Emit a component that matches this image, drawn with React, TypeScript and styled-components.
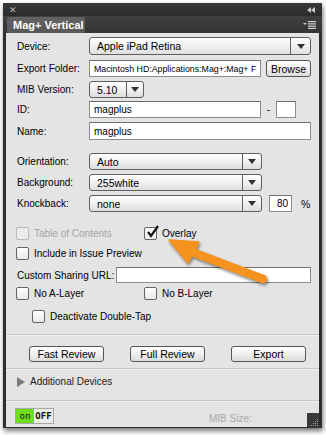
import React from 'react';
import styled, { createGlobalStyle } from 'styled-components';

const GlobalStyle = createGlobalStyle`
    html, body {
        margin: 0;
        padding: 0;
        background: #ffffff;
    }
    body {
        font-family: "Liberation Sans", Arial, sans-serif;
        font-size: 10px;
        color: #000;
    }
`

const Page = styled.div`
    position: relative;
    width: 326px;
    height: 435px;
    padding: 3px 0 0 3px;
    box-sizing: border-box;
    overflow: hidden;
`

const Window = styled.div`
    width: 319px;
    height: 425px;
    background: #2f2f2f;
    box-shadow: 1px 3px 5px rgba(0, 0, 0, 0.55);
    display: flex;
    flex-direction: column;
`

const TitleStrip = styled.div`
    height: 13px;
    display: flex;
    align-items: center;
    justify-content: space-between;
    padding: 0 7px 0 6px;
    color: #b8b8b8;
    font-size: 9px;
    background: linear-gradient(#3a3a3a, #2b2b2b);
`

const TabBar = styled.div`
    height: 17px;
    display: flex;
    align-items: flex-end;
    justify-content: space-between;
    padding: 0 6px 0 4px;
    background: linear-gradient(#3f3f3f, #353535);
`

const Tab = styled.div`
    width: 72px;
    height: 16px;
    line-height: 16px;
    padding-left: 6px;
    background: linear-gradient(#626262, #585858);
    color: #fff;
    font-weight: bold;
    font-size: 11px;
    border-radius: 2px 2px 0 0;
`

const MenuIcon = styled.div`
    height: 16px;
    display: flex;
    align-items: center;
`

const Body = styled.div`
    flex: 1;
    display: flex;
    padding: 0 3px 1px 3px;
`

const Content = styled.div`
    flex: 1;
    background: #e4e4e4;
    display: flex;
    flex-direction: column;
`

const Section = styled.div<{ $top: number }>`
    padding: 0 7px 0 11px;
    margin-top: ${p => p.$top}px;
    display: flex;
    flex-direction: column;
`

const Row = styled.div<{ $h: number; $top?: number }>`
    display: flex;
    align-items: center;
    height: ${p => p.$h}px;
    margin-top: ${p => p.$top || 0}px;
`

const Label = styled.span<{ $w?: number }>`
    width: ${p => p.$w || 72}px;
    flex: none;
    font-size: 10px;
    white-space: nowrap;
`

const Select = styled.div<{ $w: number }>`
    width: ${p => p.$w}px;
    height: 100%;
    box-sizing: border-box;
    border: 1px solid #5f5f5f;
    border-radius: 3px;
    background: linear-gradient(#ffffff, #f2f2f2 45%, #dedede);
    display: flex;
    flex: none;
`

const SelectText = styled.span`
    flex: 1;
    display: flex;
    align-items: center;
    padding-left: 7px;
    font-size: 10.5px;
    white-space: nowrap;
    overflow: hidden;
`

const SelectArrow = styled.span<{ $w: number }>`
    width: ${p => p.$w}px;
    border-left: 1px solid #5f5f5f;
    display: flex;
    align-items: center;
    justify-content: center;

    &::after {
        content: "";
        border-left: 4px solid transparent;
        border-right: 4px solid transparent;
        border-top: 5px solid #333;
    }
`

const TextBox = styled.div<{ $w: number; $align?: string; $size?: number }>`
    width: ${p => p.$w}px;
    height: 100%;
    box-sizing: border-box;
    border: 1px solid #8c8c8c;
    border-top-color: #6e6e6e;
    background: #fff;
    display: flex;
    align-items: center;
    justify-content: ${p => p.$align || 'flex-start'};
    padding: 0 3px 0 4px;
    font-size: ${p => p.$size || 10}px;
    white-space: nowrap;
    overflow: hidden;
    flex: none;
`

const Button = styled.div<{ $w: number }>`
    width: ${p => p.$w}px;
    height: 100%;
    box-sizing: border-box;
    border: 1px solid #555;
    border-radius: 3px;
    background: linear-gradient(#ffffff, #f0f0f0 50%, #dcdcdc);
    display: flex;
    align-items: center;
    justify-content: center;
    font-size: 10.5px;
    flex: none;
`

const Gap = styled.span<{ $w: number }>`
    width: ${p => p.$w}px;
    flex: none;
`

const Dash = styled.span`
    width: 15px;
    text-align: center;
    font-size: 10px;
`

const Percent = styled.span`
    margin-left: 9px;
    font-size: 10.5px;
`

const CheckGrid = styled.div<{ $top?: number }>`
    display: grid;
    grid-template-columns: 128px auto;
    align-items: center;
    height: 13px;
    margin-top: ${p => p.$top || 0}px;
`

const CheckItem = styled.div<{ $disabled?: boolean; $indent?: number }>`
    display: flex;
    align-items: center;
    gap: 5px;
    margin-left: ${p => (p.$indent || 0) - 1}px;
    color: ${p => (p.$disabled ? '#a4a4a4' : '#000')};
    font-size: 10px;
    white-space: nowrap;
`

const Box = styled.span<{ $disabled?: boolean }>`
    position: relative;
    width: 13px;
    height: 13px;
    box-sizing: border-box;
    border: 1px solid ${p => (p.$disabled ? '#b9b9b9' : '#656565')};
    border-radius: 2px;
    background: ${p => (p.$disabled ? '#ececec' : 'linear-gradient(#ffffff, #e9e9e9)')};
    flex: none;

    svg {
        position: absolute;
        left: 1px;
        top: -3px;
    }
`

const Separator = styled.div<{ $top: number }>`
    height: 1px;
    margin-top: ${p => p.$top}px;
    background: #c6c6c6;
    box-shadow: 0 1px 0 #f2f2f2;
`

const ButtonRow = styled.div`
    display: flex;
    gap: 26px;
    height: 16px;
    margin-top: 11px;
    padding-left: 23px;
`

const Expander = styled.div`
    display: flex;
    align-items: center;
    height: 11px;
    margin-top: 7px;
    padding-left: 11px;
    gap: 5px;
    font-size: 10px;
    color: #1a1a1a;

    &::before {
        content: "";
        border-top: 5px solid transparent;
        border-bottom: 5px solid transparent;
        border-left: 8px solid #7a7a7a;
    }
`

const Footer = styled.div`
    flex: 1;
    display: flex;
    align-items: flex-start;
    padding-left: 9px;
`

const Toggle = styled.div`
    display: flex;
    height: 16px;
    margin-top: 7px;
    box-sizing: border-box;
    border: 1px solid #a8a8a8;
    font-family: "DejaVu Sans Mono", monospace;
    font-size: 9px;
`

const ToggleHalf = styled.span<{ $on?: boolean }>`
    width: ${p => (p.$on ? 18 : 19)}px;
    display: flex;
    align-items: center;
    justify-content: center;
    background: ${p => (p.$on ? '#6ede1c' : '#ececec')};
    font-weight: ${p => (p.$on ? 'normal' : 'bold')};
    color: #111;
`

const MibSize = styled.span`
    margin: 12px 0 0 155px;
    color: #a8a8a8;
    font-size: 10px;
`

const Grip = styled.div`
    margin-left: auto;
    align-self: flex-end;
    width: 12px;
    height: 14px;
    background: #3a3a3a;
    display: flex;
    align-items: flex-end;
    justify-content: flex-end;
`

const ArrowLayer = styled.svg`
    position: absolute;
    left: 0;
    top: 0;
    pointer-events: none;
    filter: drop-shadow(1px 2px 1.5px rgba(0, 0, 0, 0.45));
`

const Check = () => (
    <svg width="14" height="14" viewBox="0 0 14 14">
        <path d="M2 7 L5 11 L12 1" fill="none" stroke="#111" strokeWidth="2.2" strokeLinejoin="miter" />
    </svg>
)

function Dropdown(props: { w: number; arrow: number; value: string }) {
    return (
        <Select $w={props.w}>
            <SelectText>{props.value}</SelectText>
            <SelectArrow $w={props.arrow} />
        </Select>
    );
}

const gripDots = [[8, 2], [6, 4], [8, 4], [4, 6], [6, 6], [8, 6], [2, 8], [4, 8], [6, 8], [8, 8]];

export default function App() {
    return (
        <Page>
            <GlobalStyle />
            <Window>
                <TitleStrip>
                    <span>✕</span>
                    <svg width="8" height="6" viewBox="0 0 8 6">
                        <path d="M4 0 L0 3 L4 6 Z M8 0 L4 3 L8 6 Z" fill="#c8c8c8" />
                    </svg>
                </TitleStrip>
                <TabBar>
                    <Tab>Mag+ Vertical</Tab>
                    <MenuIcon>
                        <svg width="13" height="8" viewBox="0 0 13 8">
                            <path d="M0 2 L4 2 L2 4 Z" fill="#d0d0d0" />
                            <rect x="5" y="0" width="8" height="1.2" fill="#d0d0d0" />
                            <rect x="5" y="2.3" width="8" height="1.2" fill="#d0d0d0" />
                            <rect x="5" y="4.6" width="8" height="1.2" fill="#d0d0d0" />
                            <rect x="5" y="6.8" width="8" height="1.2" fill="#d0d0d0" />
                        </svg>
                    </MenuIcon>
                </TabBar>
                <Body>
                    <Content>
                        <Section $top={4}>
                            <Row $h={18}>
                                <Label>Device:</Label>
                                <Dropdown w={222} arrow={19} value="Apple iPad Retina" />
                            </Row>
                            <Row $h={17} $top={5}>
                                <Label>Export Folder:</Label>
                                <TextBox $w={172} $size={8.8}>Macintosh HD:Applications:Mag+:Mag+ F</TextBox>
                                <Gap $w={5} />
                                <Button $w={45}>Browse</Button>
                            </Row>
                            <Row $h={17} $top={4}>
                                <Label>MIB Version:</Label>
                                <Dropdown w={55} arrow={16} value="5.10" />
                            </Row>
                            <Row $h={17} $top={3}>
                                <Label>ID:</Label>
                                <TextBox $w={172}>magplus</TextBox>
                                <Dash>-</Dash>
                                <TextBox $w={20} />
                            </Row>
                            <Row $h={18} $top={4}>
                                <Label>Name:</Label>
                                <TextBox $w={222}>magplus</TextBox>
                            </Row>
                            <Row $h={17} $top={13}>
                                <Label>Orientation:</Label>
                                <Dropdown w={173} arrow={18} value="Auto" />
                            </Row>
                            <Row $h={17} $top={4}>
                                <Label>Background:</Label>
                                <Dropdown w={173} arrow={18} value="255white" />
                            </Row>
                            <Row $h={17} $top={4}>
                                <Label>Knockback:</Label>
                                <Dropdown w={173} arrow={18} value="none" />
                                <Gap $w={7} />
                                <TextBox $w={23} $align="flex-end">80</TextBox>
                                <Percent>%</Percent>
                            </Row>
                        </Section>
                        <Section $top={15}>
                            <CheckGrid>
                                <CheckItem $disabled>
                                    <Box $disabled />Table of Contents
                                </CheckItem>
                                <CheckItem>
                                    <Box><Check /></Box>Overlay
                                </CheckItem>
                            </CheckGrid>
                            <Row $h={13} $top={7}>
                                <CheckItem>
                                    <Box />Include in Issue Preview
                                </CheckItem>
                            </Row>
                            <Row $h={16} $top={7}>
                                <Label $w={99}>Custom Sharing URL:</Label>
                                <TextBox $w={195} />
                            </Row>
                            <CheckGrid $top={4}>
                                <CheckItem>
                                    <Box />No A-Layer
                                </CheckItem>
                                <CheckItem>
                                    <Box />No B-Layer
                                </CheckItem>
                            </CheckGrid>
                            <Row $h={13} $top={10}>
                                <CheckItem $indent={16}>
                                    <Box />Deactivate Double-Tap
                                </CheckItem>
                            </Row>
                        </Section>
                        <Separator $top={11} />
                        <ButtonRow>
                            <Button $w={75}>Fast Review</Button>
                            <Button $w={75}>Full Review</Button>
                            <Button $w={75}>Export</Button>
                        </ButtonRow>
                        <Separator $top={6} />
                        <Expander>Additional Devices</Expander>
                        <Separator $top={13} />
                        <Footer>
                            <Toggle>
                                <ToggleHalf $on>on</ToggleHalf>
                                <ToggleHalf>OFF</ToggleHalf>
                            </Toggle>
                            <MibSize>MIB Size:</MibSize>
                            <Grip>
                                <svg width="10" height="10" viewBox="0 0 10 10">
                                    {gripDots.map(([x, y]) => (
                                        <rect key={x + '-' + y} x={x} y={y} width="1" height="1" fill="#9a9a9a" />
                                    ))}
                                </svg>
                            </Grip>
                        </Footer>
                    </Content>
                </Body>
            </Window>
            <ArrowLayer width="326" height="435" viewBox="0 0 326 435">
                <path d="M263 279 L192 252" stroke="#f5931e" strokeWidth="8.5" strokeLinecap="round" />
                <path d="M169 240 L199 242 L188 263 Z" fill="#f5931e" stroke="#f5931e" strokeWidth="1.5" strokeLinejoin="round" />
            </ArrowLayer>
        </Page>
    );
}
